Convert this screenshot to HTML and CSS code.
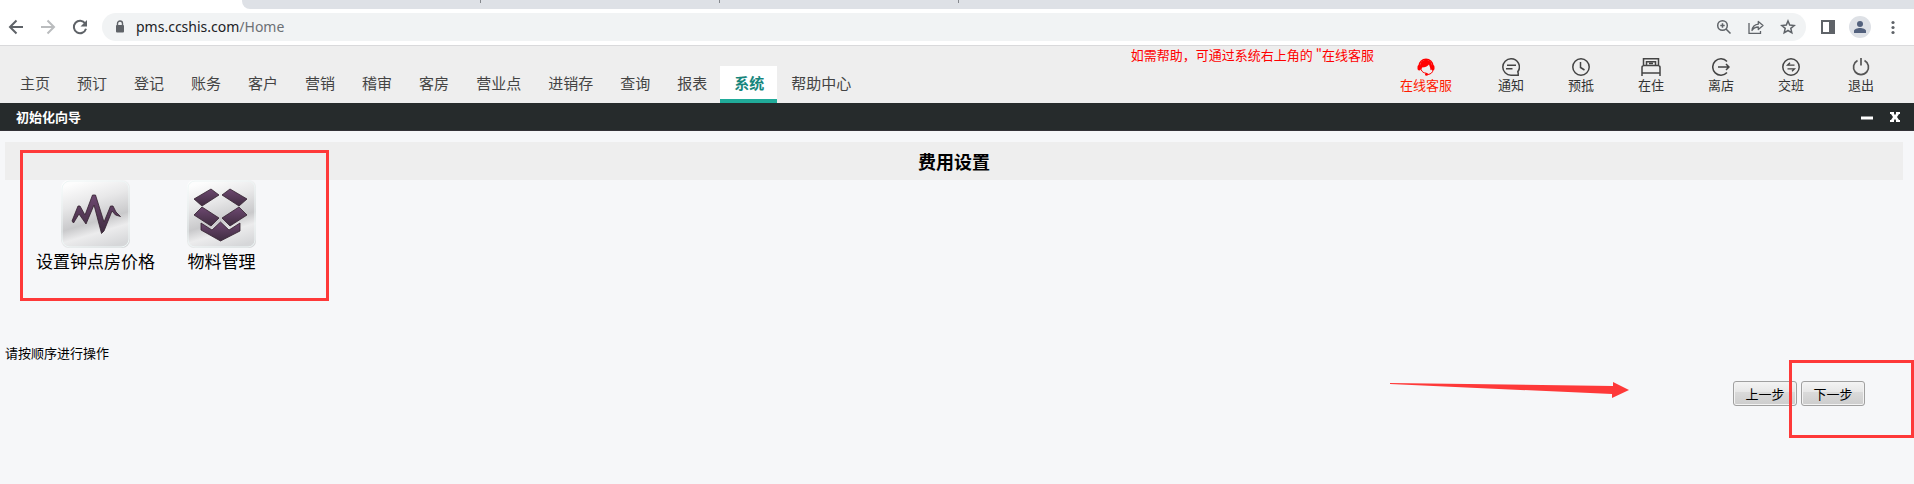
FILE: index.html
```html
<!DOCTYPE html>
<html lang="zh-CN">
<head>
    <meta charset="UTF-8">
    <meta name="viewport" content="width=device-width, initial-scale=1.0">
    <title>初始化向导</title>
    <link rel="stylesheet" href="styles.css">
</head>
<body>

<!-- Browser bar -->
<div class="browser">
    <div class="tab-strip">
        <div class="tab-active"></div>
        <div class="tabs-rest">
            <span class="tab"></span>
            <span class="tab"></span>
            <span class="tab"></span>
        </div>
    </div>
    <div class="toolbar">
        <button type="button" class="tool" aria-label="Back">
            <svg width="16" height="16" viewBox="0 0 16 16" fill="none" stroke="#5f6368" stroke-width="2"><path d="M15 8H2.500M8.500 1.500L2 8l6.500 6.500"/></svg>
        </button>
        <button type="button" class="tool" aria-label="Forward">
            <svg width="16" height="16" viewBox="0 0 16 16" fill="none" stroke="#babcbe" stroke-width="2"><path d="M1 8h12.500M7.500 1.500L14 8l-6.500 6.500"/></svg>
        </button>
        <button type="button" class="tool" aria-label="Reload">
            <svg width="16" height="16" viewBox="0 0 16 16"><path d="M13.200 4.500A6.200 6.200 0 1 0 14 9.800" fill="none" stroke="#5f6368" stroke-width="2"/><path d="M15 1v6.500H8.500z" fill="#5f6368"/></svg>
        </button>
        <div class="address">
            <svg width="10" height="14" viewBox="0 0 10 14"><path d="M2.500 6V3.500a2.500 2.500 0 0 1 5 0V6" fill="none" stroke="#5f6368" stroke-width="1.400"/><rect x="1" y="5" width="8" height="7.500" rx="1" fill="#5f6368"/></svg>
            <span class="url">pms.ccshis.com<span class="path">/Home</span></span>
            <button type="button" class="tool" aria-label="Zoom">
                <svg width="16" height="16" viewBox="0 0 16 16" fill="none" stroke="#5f6368" stroke-width="1.500"><circle cx="6.500" cy="6.500" r="4.800"/><path d="M10 10l4.500 4.500M6.500 4.300v4.400M4.300 6.500h4.400"/></svg>
            </button>
            <button type="button" class="tool" aria-label="Share">
                <svg width="16" height="16" viewBox="0 0 16 16" fill="none" stroke="#5f6368" stroke-width="1.300"><path d="M1 4v10.300h11.500V12"/><path d="M4 11.500c.5-4 2.800-6 6.300-6.300V2.500L15 6.500l-4.700 4V8c-2.800 0-4.800 1-6.300 3.500z" stroke-linejoin="round"/></svg>
            </button>
            <button type="button" class="tool" aria-label="Bookmark">
                <svg width="16" height="16" viewBox="0 0 16 16" fill="none" stroke="#5f6368" stroke-width="1.500"><path d="M8 2l1.700 4.100 4.500.4-3.400 2.900 1 4.400L8 11.500l-3.800 2.300 1-4.400L1.800 6.500l4.500-.4z"/></svg>
            </button>
        </div>
        <button type="button" class="tool tool-panel" aria-label="Side panel">
            <svg width="16" height="16" viewBox="0 0 16 16"><path d="M1 1h14v14H1z" fill="#5f6368"/><path d="M3 3h6v10H3z" fill="#fff"/></svg>
        </button>
        <button type="button" class="tool avatar" aria-label="Profile">
            <svg width="16" height="16" viewBox="0 0 16 16" fill="#53617d"><circle cx="8" cy="5" r="3"/><path d="M2 14v-2c0-2 3.500-3 6-3s6 1 6 3v2z"/></svg>
        </button>
        <button type="button" class="tool tool-menu" aria-label="Menu">
            <svg width="16" height="16" viewBox="0 0 16 16" fill="#5f6368"><circle cx="8" cy="3.500" r="1.600"/><circle cx="8" cy="8.500" r="1.600"/><circle cx="8" cy="13.500" r="1.600"/></svg>
        </button>
    </div>
</div>

<!-- Main menu -->
<header class="header">
    <nav class="menu">
        <a href="#">主页</a>
        <a href="#">预订</a>
        <a href="#">登记</a>
        <a href="#">账务</a>
        <a href="#">客户</a>
        <a href="#">营销</a>
        <a href="#">稽审</a>
        <a href="#">客房</a>
        <a href="#">营业点</a>
        <a href="#">进销存</a>
        <a href="#">查询</a>
        <a href="#">报表</a>
        <a href="#" class="active">系统</a>
        <a href="#">帮助中心</a>
    </nav>
    <p class="help">如需帮助，可通过系统右上角的 "在线客服</p>
    <div class="shortcuts">
        <a href="#" class="service">
            <svg width="18" height="18" viewBox="0 0 18 18"><path d="M2 8a7 6.800 0 0 1 14 0" fill="none" stroke="#f00" stroke-width="1.400"/><path d="M9 2C5 2 3 4.500 3 8c0 2 .3 3.300 1.300 4.500L5 9.500c3 0 5.500-1 7-3 .5 1.500 1 2.500 1.200 3.500l.3 2.300c1-1 1.500-2.300 1.500-4.300C15 4.500 13 2 9 2z" fill="#f00"/><rect x="0.500" y="7" width="3.500" height="5.500" rx="1.700" fill="#f00"/><rect x="14" y="7" width="3.500" height="5.500" rx="1.700" fill="#f00"/><path d="M16 12c-.3 2.500-2 4-5 4.500M4.300 12c1 2 2.300 3 4.500 3" fill="none" stroke="#f00"/><circle cx="9.500" cy="16.300" r="1.500" fill="#f00"/></svg>
            在线客服
        </a>
        <a href="#">
            <svg width="18" height="18" viewBox="0 0 18 18" fill="none" stroke="#444" stroke-width="1.500"><path d="M9 .8a8.200 8.200 0 1 0 0 16.400h7.200V15l-.4-1.200A8.200 8.200 0 0 0 9 .8z"/><path d="M5 7.300h9M4 10.700h6.500"/></svg>
            通知
        </a>
        <a href="#">
            <svg width="18" height="18" viewBox="0 0 18 18" fill="none" stroke="#444" stroke-width="1.500"><circle cx="9" cy="9" r="8.200"/><path d="M8.500 4v5.500l4 2.500"/></svg>
            预抵
        </a>
        <a href="#">
            <svg width="20" height="18" viewBox="0 0 20 18" fill="none" stroke="#444" stroke-width="1.500"><path d="M2.500 7.500V.8h15v6.700M1 15V9.500q0-2 2-2h14q2 0 2 2V15zM1 15v3M19 15v3"/><path d="M5.500 7V3.800h9V7M8 5.500h4"/></svg>
            在住
        </a>
        <a href="#">
            <svg width="18" height="18" viewBox="0 0 18 18" fill="none" stroke="#444" stroke-width="1.500"><path d="M15 3.500a8.200 8.200 0 1 0 0 11"/><path d="M6 9h11M14 6l3 3-3 3"/></svg>
            离店
        </a>
        <a href="#">
            <svg width="18" height="18" viewBox="0 0 18 18" fill="none" stroke="#444" stroke-width="1.500"><circle cx="9" cy="9" r="8.200"/><path d="M12.500 7.200H5.500L8 4.700M5.500 10.800h7L10 13.300" stroke-width="1.300"/></svg>
            交班
        </a>
        <a href="#">
            <svg width="18" height="18" viewBox="0 0 18 18" fill="none" stroke="#555" stroke-width="1.700"><path d="M5.500 2.500a7.500 7.500 0 1 0 7 0M9 0v7.500"/></svg>
            退出
        </a>
    </div>
</header>

<!-- Wizard window -->
<main class="window">
    <div class="title-bar">
        <h1>初始化向导</h1>
        <button type="button" aria-label="最小化">
            <svg width="12" height="12" viewBox="0 0 12 12"><path d="M0 7h12" stroke="#fff" stroke-width="3"/></svg>
        </button>
        <button type="button" aria-label="关闭">
            <svg width="12" height="12" viewBox="0 0 12 12"><path d="M1 1h4v1.500l1 1.700 1-1.700V1h4v2h-1L8 6l2 3h1v2H7V9.500L6 7.800 5 9.500V11H1V9h1l2-3-2-3H1z" fill="#fff"/></svg>
        </button>
    </div>

    <section class="wizard">
        <h2>费用设置</h2>
        <div class="steps">
            <a href="#">
                <svg width="69" height="68" viewBox="0 0 69 68">
                    <defs>
                        <linearGradient id="tile" x1="0.350" y1="0" x2="0.650" y2="1">
                            <stop offset="0" stop-color="#fdfdfd"/>
                            <stop offset="0.300" stop-color="#e8e8e9"/>
                            <stop offset="0.600" stop-color="#c9c9cb"/>
                            <stop offset="0.760" stop-color="#ececed"/>
                            <stop offset="1" stop-color="#d6d7d9"/>
                        </linearGradient>
                        <linearGradient id="plum" x1="0" y1="0" x2="0" y2="1">
                            <stop offset="0" stop-color="#6d4870"/>
                            <stop offset="1" stop-color="#3f2c40"/>
                        </linearGradient>
                    </defs>
                    <rect width="69" height="68" rx="8" fill="url(#tile)"/>
                    <rect x="1" y="1" width="67" height="66" rx="8" fill="none" stroke="#eef6f6"/>
                    <path d="M11 41L17 26h2l5 9 7.500-20h3L43 42l6.500-16h2.500l3 6 4.500 4.500-5-1.500-3.500-4L43 51l-2.500 2.500L33 25l-8 19-7-10-5.500 9z" fill="url(#plum)" stroke="#32212f" stroke-width="0.800"/>
                </svg>
                设置钟点房价格
            </a>
            <a href="#">
                <svg width="69" height="68" viewBox="0 0 69 68">
                    <rect width="69" height="68" rx="7" fill="url(#tile)"/>
                    <rect x="1" y="1" width="67" height="66" rx="7" fill="none" stroke="#eef6f6"/>
                    <g fill="url(#plum)" stroke="#32212f" stroke-width="0.800">
                        <path d="M24 9l8 6-17 11-8-7z"/>
                        <path d="M43 9l17 10-8 7-17-11z"/>
                        <path d="M15 27l17 11-8 8L7 35z"/>
                        <path d="M52 27l8 8-17 11-8-8z"/>
                        <path d="M14 43l11 7 8.500-8 8.500 8 11-7v8L33.500 61 14 50z"/>
                    </g>
                </svg>
                物料管理
            </a>
        </div>
        <p class="tip">请按顺序进行操作</p>
        <div class="actions">
            <button type="button">上一步</button>
            <button type="button">下一步</button>
        </div>

        <!-- Marks drawn over the page -->
        <div class="mark mark-steps"></div>
        <div class="mark mark-next"></div>
        <svg class="arrow" width="239" height="16" viewBox="0 0 239 16"><path d="M0 1L223 4V0l16 8-17 8v-4L0 2z" fill="#fe3939"/></svg>
    </section>
</main>

</body>
</html>
```
FILE: styles.css
```css
* {
    box-sizing: border-box;
}
body {
    margin: 0;
    font-family: "Noto Sans CJK SC", sans-serif;
    font-size: 13px;
    background-color: #f6f7f9;
    color: #000;
}
h1, h2, p {
    margin: 0;
}
a {
    color: inherit;
    text-decoration: none;
}
button {
    font-family: inherit;
    font-size: 13px;
    cursor: pointer;
}
svg {
    display: block;
    flex-shrink: 0;
}

/* Browser bar */
.browser {
    background-color: #fff;
    border-bottom: 1px solid #d9d9db;
}
.tab-strip {
    display: flex;
    height: 9px;
}
.tab-active {
    width: 242px;
}
.tabs-rest {
    flex: 1;
    display: flex;
    background-color: #dee1e6;
    border-bottom-left-radius: 8px;
}
.tab {
    width: 239px;
    height: 3px;
    border-right: 1px solid #85888d;
}
.toolbar {
    display: flex;
    align-items: center;
    padding: 4px 13px 4px 8px;
    gap: 16px;
}
.tool {
    border: 0;
    padding: 0;
    background: none;
}
.address {
    flex: 1;
    display: flex;
    align-items: center;
    gap: 16px;
    height: 28px;
    padding: 0 10px 0 13px;
    margin-left: -2px;
    border-radius: 14px;
    background-color: #f1f3f4;
}
.url {
    flex: 1;
    font-family: "Noto Sans", sans-serif;
    font-size: 14px;
    line-height: 20px;
    color: #202124;
    margin-left: -5px;
}
.path {
    color: #6c7074;
}
.tool-panel {
    margin-left: -2px;
}
.avatar {
    padding: 3px;
    border-radius: 50%;
    background-color: #dee1e6;
    margin-left: -3px;
}
.tool-menu {
    margin-left: -2px;
}

/* Main menu */
.header {
    display: flex;
    height: 57px;
    background-color: #eee;
}
.menu {
    display: flex;
    align-items: flex-end;
    padding-left: 6px;
}
.menu a {
    padding: 7px 13px 7px 14px;
    font-size: 15px;
    line-height: 19px;
    color: #444;
    border-bottom: 4px solid transparent;
}
.menu a.active {
    background-color: #fff;
    color: #16857c;
    font-weight: bold;
    border-bottom-color: #20ab9a;
}
.help {
    margin-left: auto;
    line-height: 17px;
    color: #f00;
}
.shortcuts {
    display: flex;
    gap: 44px;
    padding: 12px 40px 0 26px;
}
.shortcuts a {
    display: flex;
    flex-direction: column;
    align-items: center;
    line-height: 17px;
    color: #333;
}
.shortcuts svg {
    margin: 0 -2px;
}
.shortcuts .service {
    margin-right: 2px;
    color: #ff1a00;
}

/* Wizard window */
.title-bar {
    display: flex;
    align-items: center;
    gap: 16px;
    height: 28px;
    padding: 0 13px 0 16px;
    background-color: #262b2c;
    border-bottom: 1px solid #333238;
}
.title-bar h1 {
    flex: 1;
    font-size: 13px;
    line-height: 18px;
    color: #fff;
}
.title-bar button {
    border: 0;
    padding: 0;
    background: none;
}
.wizard {
    position: relative;
    padding: 11px 11px 76px 5px;
}
.wizard h2 {
    font-size: 18px;
    line-height: 38px;
    text-align: center;
    background-color: #eee;
}
.steps {
    display: flex;
    gap: 32px;
    padding-left: 31px;
}
.steps a {
    display: flex;
    flex-direction: column;
    align-items: center;
    font-size: 17px;
    line-height: 26px;
}
.tip {
    margin-top: 69px;
    line-height: 20px;
}
.actions {
    display: flex;
    justify-content: flex-end;
    gap: 4px;
    margin-top: 18px;
    padding-right: 38px;
}
.actions button {
    min-width: 64px;
    height: 25px;
    padding: 0 8px;
    line-height: 18px;
    border: 1px solid #a0a0a0;
    border-radius: 3px;
    background: linear-gradient(#f4f4f4, #e6e6e6 45%, #dadada 45%, #cdcdcd);
    box-shadow: inset 0 0 0 1px #f3f3f3;
}

/* Marks */
.mark {
    position: absolute;
    border: 3px solid #fe3939;
    pointer-events: none;
}
.mark-steps {
    left: 20px;
    top: 19px;
    width: 309px;
    height: 151px;
}
.mark-next {
    right: 0;
    top: 229px;
    width: 125px;
    height: 78px;
}
.arrow {
    position: absolute;
    right: 285px;
    top: 251px;
}
```
